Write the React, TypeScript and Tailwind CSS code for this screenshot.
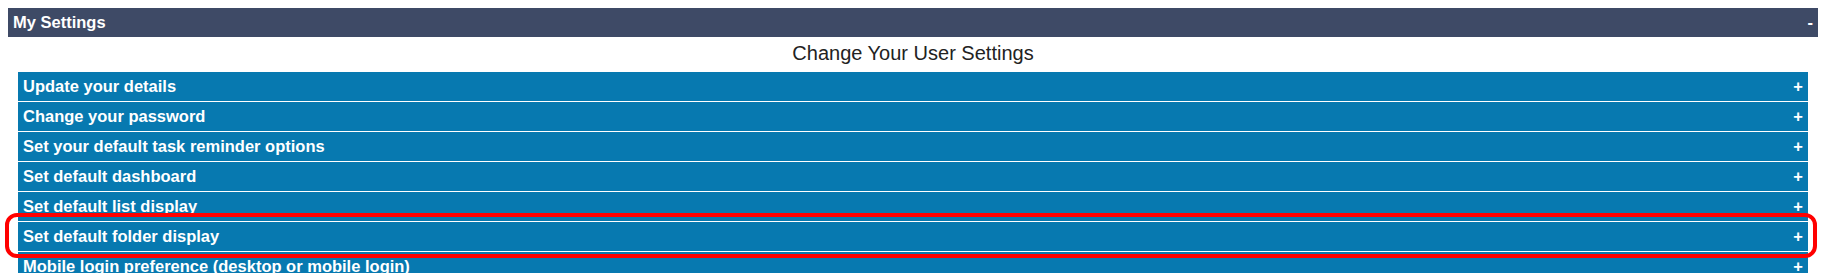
import React from "react";

const sections = [
  "Update your details",
  "Change your password",
  "Set your default task reminder options",
  "Set default dashboard",
  "Set default list display",
  "Set default folder display",
  "Mobile login preference (desktop or mobile login)",
];

const SettingsRow = ({ label }: { label: string }) => {
  return (
    <div className="flex h-[29px] items-center justify-between bg-[#0779b0] pl-[5px] pr-[5px] text-[16.5px] font-bold text-white cursor-pointer">
      <span>{label}</span>
      <span>+</span>
    </div>
  );
};

export default function App() {
  return (
    <div
      className="relative bg-white p-2 text-[#222]"
      style={{ fontFamily: '"Liberation Sans", Arial, sans-serif' }}
    >
      <div className="flex h-[29px] items-center justify-between bg-[#3e4a66] pl-[5px] pr-[5px] text-[16.5px] font-bold text-white">
        <span>My Settings</span>
        <span>-</span>
      </div>
      <div className="px-[10px]">
        <h2 className="pt-[5px] pb-[7px] text-center text-[20px] leading-[23px] font-normal text-[#222]">
          Change Your User Settings
        </h2>
        <div className="flex flex-col gap-px">
          {sections.map((s) => (
            <SettingsRow key={s} label={s} />
          ))}
        </div>
      </div>
      {/* highlight around the folder display row */}
      <div className="pointer-events-none absolute left-[5px] top-[213px] h-[45px] w-[1812px] rounded-[12px] border-4 border-[#ff0000]" />
    </div>
  );
}
